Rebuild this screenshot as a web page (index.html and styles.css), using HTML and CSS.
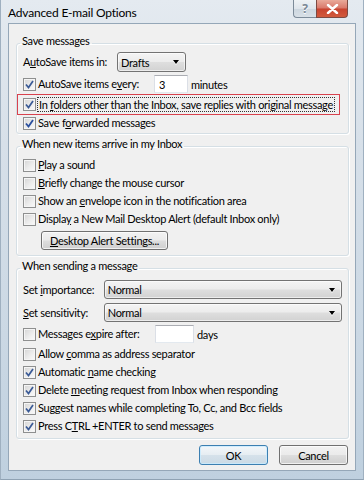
FILE: index.html
```html
<!DOCTYPE html>
<html>
<head>
<meta charset="utf-8">
<link rel="stylesheet" href="styles.css">
</head>
<body>
<div class="window">
  <div class="titlebar">
    <span class="title">Advanced E-mail Options</span>
    <div class="caption-btns">
      <span class="cbtn help">?</span>
      <span class="cbtn close"><svg width="13" height="10" viewBox="0 0 13 10"><path d="M2 1 L11 9 M11 1 L2 9" stroke="#fff" stroke-width="2.4" stroke-linecap="round"/></svg></span>
    </div>
  </div>
  <div class="client">
    <fieldset class="group g1">
      <legend>Save messages</legend>
      <div class="row row-combo">
        <span class="lbl lbl-autosave">A<u>u</u>toSave items in:</span>
        <span class="combo combo-drafts"><span>Drafts</span><i class="arrow"></i></span>
      </div>
      <div class="row row-input">
        <span class="cb on"><svg viewBox="0 0 11 11"><path d="M2 5.5 L4.5 8.5 L9 2" fill="none" stroke="#3a5a96" stroke-width="1.7"/></svg></span>
        <span class="lbl lbl-every">AutoSave items e<u>v</u>ery:</span>
        <span class="textbox tb-minutes">3</span>
        <span class="after">minutes</span>
      </div>
      <div class="row row-marked">
        <span class="cb on"><svg viewBox="0 0 11 11"><path d="M2 5.5 L4.5 8.5 L9 2" fill="none" stroke="#3a5a96" stroke-width="1.7"/></svg></span>
        <span class="lbl focus">In <u>f</u>olders other than the Inbox, save replies with original message</span>
      </div>
      <div class="row row-last1">
        <span class="cb on"><svg viewBox="0 0 11 11"><path d="M2 5.5 L4.5 8.5 L9 2" fill="none" stroke="#2a4f9e" stroke-width="1.8"/></svg></span>
        <span class="lbl">Save f<u>o</u>rwarded messages</span>
      </div>
    </fieldset>

    <fieldset class="group g2">
      <legend>When new items arrive in my Inbox</legend>
      <div class="row"><span class="cb"></span><span class="lbl"><u>P</u>lay a sound</span></div>
      <div class="row"><span class="cb"></span><span class="lbl"><u>B</u>riefly change the mouse cursor</span></div>
      <div class="row"><span class="cb"></span><span class="lbl">Show an <u>e</u>nvelope icon in the notification area</span></div>
      <div class="row"><span class="cb"></span><span class="lbl">Displa<u>y</u> a New Mail Desktop Alert (default Inbox only)</span></div>
      <span class="btn btn-alert"><u>D</u>esktop Alert Settings...</span>
    </fieldset>

    <fieldset class="group g3">
      <legend>When sending a message</legend>
      <div class="row row-combo2">
        <span class="lbl lbl-set">Set <u>i</u>mportance:</span>
        <span class="combo combo-wide"><span>Normal</span><i class="arrow"></i></span>
      </div>
      <div class="row row-combo2 second">
        <span class="lbl lbl-set"><u>S</u>et sensitivity:</span>
        <span class="combo combo-wide"><span>Normal</span><i class="arrow"></i></span>
      </div>
      <div class="row row-expire">
        <span class="cb"></span>
        <span class="lbl lbl-expire">Messages e<u>x</u>pire after:</span>
        <span class="textbox tb-days"></span>
        <span class="after">days</span>
      </div>
      <div class="row"><span class="cb"></span><span class="lbl">Allow <u>c</u>omma as address separator</span></div>
      <div class="row"><span class="cb on"><svg viewBox="0 0 11 11"><path d="M2 5.5 L4.5 8.5 L9 2" fill="none" stroke="#3a5a96" stroke-width="1.7"/></svg></span><span class="lbl">Automatic <u>n</u>ame checking</span></div>
      <div class="row"><span class="cb on"><svg viewBox="0 0 11 11"><path d="M2 5.5 L4.5 8.5 L9 2" fill="none" stroke="#3a5a96" stroke-width="1.7"/></svg></span><span class="lbl">Delete <u>m</u>eeting request from Inbox when responding</span></div>
      <div class="row"><span class="cb on"><svg viewBox="0 0 11 11"><path d="M2 5.5 L4.5 8.5 L9 2" fill="none" stroke="#3a5a96" stroke-width="1.7"/></svg></span><span class="lbl">Su<u>g</u>gest names while completing To, Cc, and Bcc fields</span></div>
      <div class="row"><span class="cb on"><svg viewBox="0 0 11 11"><path d="M2 5.5 L4.5 8.5 L9 2" fill="none" stroke="#3a5a96" stroke-width="1.7"/></svg></span><span class="lbl">Press C<u>T</u>RL +ENTER to send messages</span></div>
    </fieldset>

    <div class="actions">
      <span class="btn btn-ok">OK</span>
      <span class="btn btn-cancel">Cancel</span>
    </div>
  </div>
</div>
</body>
</html>
```

FILE: styles.css
```css
* { box-sizing: border-box; }
html, body { margin: 0; padding: 0; }
body {
  width: 364px;
  height: 480px;
  overflow: hidden;
  font-family: Lato, "Noto Sans", sans-serif;
  font-size: 11px;
  letter-spacing: -0.3px;
  color: #000;
  background: #fff;
}
.window {
  width: 364px;
  height: 480px;
  display: flex;
  flex-direction: column;
  padding: 0 7px 8px 7px;
  background: linear-gradient(180deg, #e4eaf0 0%, #d7e0e9 30%, #cbd8e4 70%, #bfd0df 100%);
  border-left: 1px solid #9fb0c0;
  border-right: 1px solid #9fb0c0;
  border-bottom: 1px solid #8fa2b3;
}
.titlebar {
  height: 23px;
  flex: none;
  display: flex;
  justify-content: space-between;
  align-items: flex-start;
}
.title {
  padding-top: 5px;
  line-height: 15px;
  font-size: 12px;
  letter-spacing: -0.2px;
  color: #000;
}
.caption-btns {
  display: flex;
  margin-right: 8px;
}
.cbtn {
  height: 18px;
  display: flex;
  align-items: center;
  justify-content: center;
  border: 1px solid #7c8b99;
  border-top: none;
}
.help {
  width: 23px;
  border-radius: 0 0 0 4px;
  border-right: none;
  background: linear-gradient(180deg, #eef2f5 0%, #dfe6ec 50%, #ccd6df 51%, #d8e0e7 100%);
  color: #7a8896;
  font-family: "Noto Sans", sans-serif;
  font-weight: bold;
  font-size: 12px;
  letter-spacing: 0;
  text-shadow: 0 1px 0 #fff;
}
.close {
  width: 32px;
  border-radius: 0 0 4px 0;
  border-color: #7d4a42;
  background: linear-gradient(180deg, #e9aa9a 0%, #d9786a 48%, #c8432f 52%, #d25a3c 100%);
}
.client {
  flex: 1;
  display: flex;
  flex-direction: column;
  background: #f0f0f0;
  border: 1px solid #95a7b8;
  padding: 10px 6px 5px 7px;
}
.group {
  margin: 0;
  min-width: 0;
  border: 1px solid #d5dfe5;
  border-radius: 3px;
  padding: 0 6px 0 6px;
  box-shadow: 1px 1px 0 #fff, inset 1px 1px 0 #fff;
}
.group legend {
  padding: 0 2px 4px 2px;
  margin-left: -3px;
  line-height: 14px;
  color: #000;
}
.g1 { padding-bottom: 2px; }
.g2 { margin-top: 3px; padding-top: 1px; padding-bottom: 5px; }
.g3 { margin-top: 3px; padding-bottom: 3px; }

.row {
  display: flex;
  align-items: center;
  height: 18px;
  white-space: nowrap;
}
.lbl { line-height: 14px; }
.row-combo { height: 20px; }
.row-input { margin-top: 3px; }
.row-marked {
  margin-top: 1px;
  height: 21px;
  margin-left: -6px;
  margin-right: 2px;
  padding-left: 5px;
  border: 1.5px solid #d8424e;
}
.row-last1 { height: 16px; }
.focus {
  outline: 1px dotted #333;
  outline-offset: 0;
  padding: 0 1px;
  line-height: 13px;
}
.lbl-autosave { width: 94px; }
.lbl-every { width: 116px; }
.lbl-set { width: 81px; }
.lbl-expire { width: 117px; }
.row-combo2 { height: 19px; margin-top: 3px; }
.row-combo2.second { margin-top: 4px; }
.row-expire { margin-top: 3px; margin-bottom: 2px; }

.cb {
  flex: none;
  width: 13px;
  height: 13px;
  margin-right: 2px;
  border: 1px solid #8e8f8f;
  background: linear-gradient(135deg, #d4d4d4 0%, #ececec 55%, #fbfbfb 100%);
  box-shadow: inset 0 0 0 1px #f5f5f5;
  display: flex;
  align-items: center;
  justify-content: center;
}
.cb svg { width: 11px; height: 11px; display: block; }

.combo {
  display: flex;
  align-items: center;
  justify-content: space-between;
  height: 100%;
  padding: 0 6px 0 3px;
  border: 1px solid #737373;
  border-radius: 3px;
  background: linear-gradient(180deg, #f4f4f4 0%, #ececec 48%, #dedede 52%, #d2d2d2 100%);
  box-shadow: inset 0 0 0 1px rgba(255,255,255,0.6);
}
.combo-drafts { width: 69px; }
.combo-wide { width: 239px; }
.arrow {
  width: 0;
  height: 0;
  border-left: 3.5px solid transparent;
  border-right: 3.5px solid transparent;
  border-top: 4px solid #000;
  filter: drop-shadow(0 1px 0 #fff);
}

.textbox {
  display: flex;
  align-items: center;
  background: #fff;
  border: 1px solid #dbdfe6;
  border-top-color: #abadb3;
  border-bottom-color: #e3e9ef;
  padding-left: 4px;
}
.tb-minutes { width: 34px; height: 18px; }
.tb-days { width: 39px; height: 18px; }
.after { margin-left: 3px; }

.btn {
  display: flex;
  align-items: center;
  justify-content: center;
  border: 1px solid #707070;
  border-radius: 3px;
  background: linear-gradient(180deg, #f2f2f2 0%, #ebebeb 48%, #dddddd 52%, #cfcfcf 100%);
  box-shadow: inset 0 0 0 1px rgba(255,255,255,0.7);
  white-space: nowrap;
}
.btn-alert {
  width: 127px;
  height: 19px;
  margin-top: 3px;
  margin-left: 18px;
}
.actions {
  display: flex;
  justify-content: flex-end;
  gap: 11px;
  margin-top: 6px;
  margin-right: 1px;
}
.btn-ok, .btn-cancel { width: 69px; height: 20px; }
.btn-ok {
  border-color: #3c7fb1;
  background: linear-gradient(180deg, #f3f7fa 0%, #e6edf2 48%, #d5e1ea 52%, #cbdae5 100%);
  box-shadow: inset 0 0 0 1px rgba(200,235,255,0.8);
}
```
